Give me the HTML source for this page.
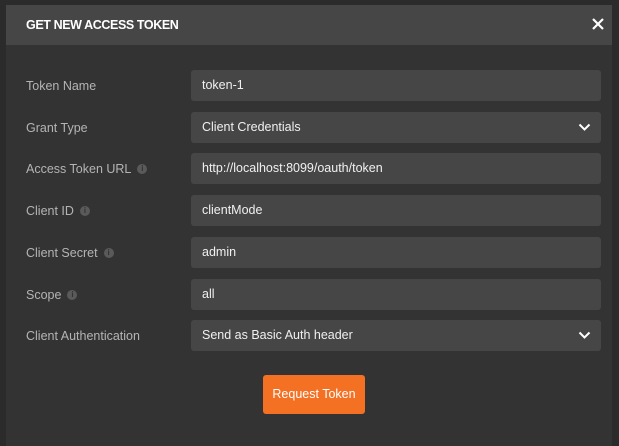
<!DOCTYPE html>
<html><head><style>
body{margin:0;width:619px;height:446px;background:#2b2b2b;overflow:hidden;font-family:"Liberation Sans",sans-serif;position:relative}
.modal{position:absolute;left:6px;top:5px;width:606px;height:441px;background:#333}
.hdr{height:40px;background:#464646;color:#fff;font-size:12.5px;font-weight:bold;line-height:40px;padding-left:20px;letter-spacing:-0.4px}
.x{position:absolute;right:4px;top:9px;width:20px;height:20px}
.row{position:absolute;left:0;width:606px;height:31px}
.lbl{position:absolute;left:20px;top:0;height:31px;display:flex;align-items:center;color:#b4b4b4;font-size:12.5px}
.i{display:inline-block;width:10px;height:10px;border-radius:50%;background:#5a5a5a;margin-left:6px;color:#333;font-size:8px;line-height:10px;text-align:center;font-weight:bold}
.in{position:absolute;left:185px;width:410px;height:31px;background:#464646;border-radius:3px;color:#f0f0f0;font-size:12.5px;line-height:31px;box-sizing:border-box;padding-left:11px}
.chev{position:absolute;right:10px;top:10px}
.btn{position:absolute;left:257px;top:370px;width:102px;height:39px;background:#f47023;border-radius:3px;color:#fff;font-size:12.5px;line-height:39px;text-align:center}
</style></head><body>
<div class="modal">
<div class="hdr">GET NEW ACCESS TOKEN</div>
<svg class="x" viewBox="0 0 20 20"><path d="M5 5L15 15M15 5L5 15" stroke="#fff" stroke-width="2.2"/></svg>
<div class="row" style="top:65px"><div class="lbl">Token Name</div><div class="in">token-1</div></div>
<div class="row" style="top:107px"><div class="lbl">Grant Type</div><div class="in">Client Credentials<svg class="chev" width="13" height="10" viewBox="0 0 13 10"><path d="M1.5 2.5L6.5 7.5L11.5 2.5" stroke="#fff" stroke-width="2" fill="none"/></svg></div></div>
<div class="row" style="top:148px"><div class="lbl">Access Token URL<span class="i">i</span></div><div class="in">http://localhost:8099/oauth/token</div></div>
<div class="row" style="top:190px"><div class="lbl">Client ID<span class="i">i</span></div><div class="in">clientMode</div></div>
<div class="row" style="top:232px"><div class="lbl">Client Secret<span class="i">i</span></div><div class="in">admin</div></div>
<div class="row" style="top:274px"><div class="lbl">Scope<span class="i">i</span></div><div class="in">all</div></div>
<div class="row" style="top:315px"><div class="lbl">Client Authentication</div><div class="in">Send as Basic Auth header<svg class="chev" width="13" height="10" viewBox="0 0 13 10"><path d="M1.5 2.5L6.5 7.5L11.5 2.5" stroke="#fff" stroke-width="2" fill="none"/></svg></div></div>
<div class="btn">Request Token</div>
</div>
</body></html>
